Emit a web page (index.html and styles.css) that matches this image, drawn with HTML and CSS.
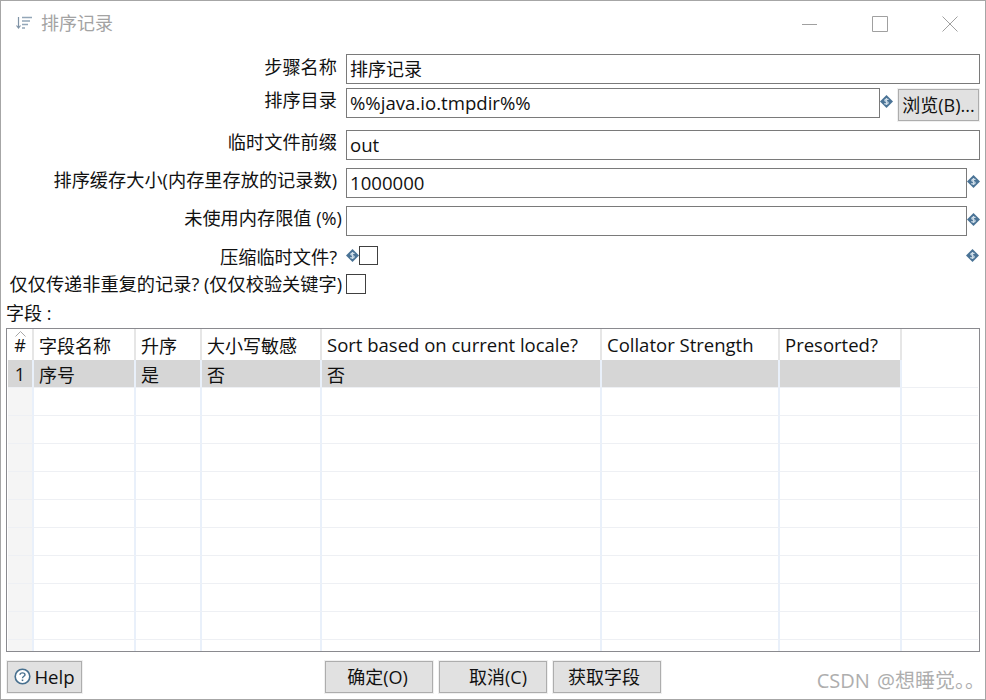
FILE: index.html
```html
<!DOCTYPE html>
<html>
<head>
  <meta charset="UTF-8">
  <title>排序记录</title>
  <link rel="stylesheet" href="styles.css">
</head>
<body>
  <svg class="defs" width="0" height="0">
    <symbol id="var" viewBox="0 0 13 13">
      <path d="M6.5 0L13 6.5 6.5 13 0 6.5z" fill="#4a7396"/>
      <path d="M8.5 4.6C8 3.9 5 3.6 4.8 5.2 4.6 7 8.4 6 8.2 7.900 8 9.400 5 9.100 4.400 8.300M6.500 2.900v7.200" fill="none" stroke="#cfdde8" stroke-width="1.200"/>
    </symbol>
  </svg>

  <div class="window">
    <div class="titlebar">
      <svg class="title-icon" width="17" height="14" viewBox="0 0 17 14">
        <path d="M2.500 1v10.500M.5 9.500l2 2.500 2-2.500" fill="none" stroke="#7f93a6" stroke-width="1.200"/>
        <path d="M6 1.500h10M6 5h8M6 8.500h6M6 12h3" fill="none" stroke="#93a6b8" stroke-width="1.300"/>
      </svg>
      <span class="title-text">排序记录</span>
      <div class="win-buttons">
        <svg width="16" height="16" viewBox="0 0 16 16"><path d="M0 8.500h15" stroke="#a0a0a0" fill="none"/></svg>
        <svg width="16" height="16" viewBox="0 0 16 16"><path d="M.5 .5h15v15H.5z" stroke="#a0a0a0" fill="none"/></svg>
        <svg width="16" height="16" viewBox="0 0 16 16"><path d="M.5 .5l15 15M15.500 .5l-15 15" stroke="#a0a0a0" fill="none"/></svg>
      </div>
    </div>

    <div class="form">
      <div class="row row-name">
        <label class="lbl">步骤名称</label>
        <input class="field field-cn" value="排序记录">
      </div>
      <div class="row row-dir">
        <label class="lbl">排序目录</label>
        <input class="field" value="%%java.io.tmpdir%%">
        <svg class="var"><use href="#var"/></svg>
        <button class="btn btn-browse">浏览(B)...</button>
      </div>
      <div class="row row-prefix">
        <label class="lbl">临时文件前缀</label>
        <input class="field" value="out">
      </div>
      <div class="row row-cache">
        <label class="lbl">排序缓存大小(内存里存放的记录数)</label>
        <input class="field" value="1000000">
        <svg class="var"><use href="#var"/></svg>
      </div>
      <div class="row row-free">
        <label class="lbl lbl-wide">未使用内存限值 (%)</label>
        <input class="field">
        <svg class="var"><use href="#var"/></svg>
      </div>
      <div class="row row-compress">
        <label class="lbl">压缩临时文件?</label>
        <svg class="var var-left"><use href="#var"/></svg>
        <span class="check"></span>
        <svg class="var var-end"><use href="#var"/></svg>
      </div>
      <div class="row row-unique">
        <label class="lbl lbl-wide">仅仅传递非重复的记录? (仅仅校验关键字)</label>
        <span class="check"></span>
      </div>
    </div>

    <div class="fields-title">字段 :</div>

    <div class="table-box">
      <table class="grid">
        <colgroup>
          <col class="c-num"><col class="c-name"><col class="c-asc"><col class="c-case">
          <col class="c-locale"><col class="c-coll"><col class="c-pre"><col>
        </colgroup>
        <thead>
          <tr>
            <th class="num"><svg class="sort-mark" width="11" height="6" viewBox="0 0 11 6"><path d="M.5 5.500L5.500 .5l5 5" fill="none" stroke="#a8a8a8"/></svg>#</th>
            <th>字段名称</th><th>升序</th><th>大小写敏感</th>
            <th class="en">Sort based on current locale?</th><th class="en">Collator Strength</th><th class="en">Presorted?</th><th class="blank"></th>
          </tr>
        </thead>
        <tbody>
          <tr class="selected">
            <td class="num">1</td><td>序号</td><td>是</td><td>否</td><td>否</td><td></td><td></td><td class="blank"></td>
          </tr>
          <tr><td class="num"></td><td></td><td></td><td></td><td></td><td></td><td></td><td class="blank"></td></tr>
          <tr><td class="num"></td><td></td><td></td><td></td><td></td><td></td><td></td><td class="blank"></td></tr>
          <tr><td class="num"></td><td></td><td></td><td></td><td></td><td></td><td></td><td class="blank"></td></tr>
          <tr><td class="num"></td><td></td><td></td><td></td><td></td><td></td><td></td><td class="blank"></td></tr>
          <tr><td class="num"></td><td></td><td></td><td></td><td></td><td></td><td></td><td class="blank"></td></tr>
          <tr><td class="num"></td><td></td><td></td><td></td><td></td><td></td><td></td><td class="blank"></td></tr>
          <tr><td class="num"></td><td></td><td></td><td></td><td></td><td></td><td></td><td class="blank"></td></tr>
          <tr><td class="num"></td><td></td><td></td><td></td><td></td><td></td><td></td><td class="blank"></td></tr>
          <tr><td class="num"></td><td></td><td></td><td></td><td></td><td></td><td></td><td class="blank"></td></tr>
          <tr class="last"><td class="num"></td><td></td><td></td><td></td><td></td><td></td><td></td><td class="blank"></td></tr>
        </tbody>
      </table>
    </div>

    <div class="footer">
      <button class="btn btn-help">
        <svg width="17" height="17" viewBox="0 0 17 17">
          <circle cx="8.500" cy="8.500" r="7.300" fill="#fff" stroke="#47708f" stroke-width="1.600"/>
          <path d="M6 6.700C6 4.300 11 4.300 11 6.700 11 8.400 8.500 8.200 8.500 10.200" fill="none" stroke="#47708f" stroke-width="1.400"/>
          <path d="M7.700 11.500h1.600v1.600H7.700z" fill="#47708f"/>
        </svg>
        Help
      </button>
      <div class="footer-center">
        <button class="btn btn-main btn-ok">确定(O)</button>
        <button class="btn btn-main btn-cancel">取消(C)</button>
        <button class="btn btn-main btn-get">获取字段</button>
      </div>
      <div class="watermark">CSDN @想睡觉。。</div>
    </div>
  </div>
</body>
</html>
```

FILE: styles.css
```css
* {
  box-sizing: border-box;
}

html, body {
  margin: 0;
  padding: 0;
}

body {
  width: 986px;
  height: 700px;
  background: #fff;
  color: #111;
  font-family: "Open Sans", "Noto Sans CJK SC", sans-serif;
  font-size: 18px;
  overflow: hidden;
}

.defs {
  display: block;
  height: 0;
}

.window {
  position: relative;
  width: 986px;
  height: 700px;
  border: 1px solid #a6a6a6;
  display: flex;
  flex-direction: column;
}

.titlebar {
  height: 53px;
  flex: none;
  display: flex;
  align-items: flex-start;
  padding: 14px 27px 0 15px;
}

.title-icon {
  margin-top: 1px;
}

.title-text {
  margin-left: 8px;
  color: #a3a3a3;
  font-size: 18px;
  line-height: 16px;
}

.win-buttons {
  margin-left: auto;
  display: flex;
  gap: 54px;
  margin-top: 1px;
}

.form {
  display: flex;
  flex-direction: column;
}

.row {
  display: flex;
  align-items: flex-start;
  padding-right: 5px;
}

.lbl {
  width: 336px;
  flex: none;
  text-align: right;
  white-space: nowrap;
  font-size: 18.200px;
  line-height: 24px;
}

.lbl-wide {
  width: 341px;
}

.field {
  flex: 1;
  min-width: 0;
  height: 30px;
  margin-left: 9px;
  padding: 0 3px 2px;
  border: 1px solid #7a7a7a;
  border-radius: 0;
  outline: none;
  background: #fff;
  color: #111;
  font: inherit;
  font-size: 18.600px;
}

.field-cn {
  font-size: 18px;
}

.lbl-wide + .field {
  margin-left: 4px;
}

.var {
  width: 13px;
  height: 13px;
  flex: none;
}

.row-name { height: 34px; }
.row-dir { height: 42px; padding-right: 6px; }
.row-prefix { height: 38px; }
.row-cache { height: 38px; padding-right: 12px; }
.row-free { height: 40px; padding-right: 12px; }
.row-compress { height: 28px; padding-right: 6px; }
.row-unique { height: 26px; }

.row-cache .var,
.row-free .var {
  margin: 7px -7px 0 0;
}

.row-name .lbl { padding-top: 1px; }

.row-dir .var {
  margin: 7px 0 0 0;
}

.btn {
  height: 32px;
  padding: 0 0 2px;
  border: 1px solid #adadad;
  outline: 1px solid #f0f0f0;
  background: #e1e1e1;
  color: #111;
  font: inherit;
  font-size: 18px;
  white-space: nowrap;
}

.btn-browse {
  width: 81px;
  flex: none;
  margin: 1px 0 0 5px;
}

.row-compress .var-left {
  margin: 3px 0 0 9px;
}

.check {
  width: 20px;
  height: 20px;
  flex: none;
  border: 1px solid #404040;
  background: #fff;
  display: block;
}

.row-compress .check {
  width: 19px;
  height: 19px;
}

.row-compress .lbl {
  margin-top: -1px;
}

.row-compress .var-end {
  margin: 3px 0 0 auto;
}

.row-unique .check {
  margin-left: 4px;
}

.row-unique .lbl {
  margin-top: -2px;
}

.fields-title {
  height: 24px;
  padding-left: 5px;
  margin-top: 1px;
  line-height: 24px;
  flex: none;
}

.table-box {
  margin: 3px 5px 0 5px;
  height: 324px;
  flex: none;
  border: 1px solid #8a8a8f;
  padding: 0 1px;
  overflow: hidden;
}

.grid {
  width: 100%;
  table-layout: fixed;
  border-collapse: separate;
  border-spacing: 0;
}

.c-num { width: 26px; }
.c-name { width: 102px; }
.c-asc { width: 66px; }
.c-case { width: 120px; }
.c-locale { width: 280px; }
.c-coll { width: 178px; }
.c-pre { width: 122px; }

.grid th,
.grid td {
  height: 28px;
  padding: 0 0 0 5px;
  border-right: 2px solid #e9f0fa;
  border-bottom: 1px solid #eef0f4;
  font-weight: normal;
  text-align: left;
  white-space: nowrap;
  font-size: 18px;
}

.grid th {
  height: 31px;
  border-bottom: 0;
  border-right-color: #e6e6e6;
}

.grid .en {
  font-size: 18.500px;
}

.grid .blank {
  border-right: 0;
}

.grid .num {
  position: relative;
  padding: 0;
  text-align: center;
  background: #f5f5f5;
}

.grid th.num {
  background: #fff;
}

.sort-mark {
  position: absolute;
  left: 7px;
  top: 2px;
}

.selected td {
  background: #d6d6d6;
}

.selected .num {
  background: #d6d6d6;
}

.selected .blank {
  background: #fff;
}

.footer {
  flex: none;
  height: 32px;
  margin-top: 9px;
  padding: 0 6px;
  display: flex;
  position: relative;
}

.btn-help {
  width: 75px;
  display: flex;
  align-items: center;
  justify-content: center;
  gap: 3px;
  font-size: 18.600px;
}

.footer-center {
  display: flex;
  gap: 6px;
  margin-left: 243px;
}

.btn-main {
  width: 108px;
}

.btn-ok {
  padding-right: 3px;
}

.btn-cancel {
  padding-left: 10px;
}

.btn-get {
  padding-right: 6px;
}

.watermark {
  position: absolute;
  right: 0;
  bottom: 0;
  color: #aeaeae;
  font-size: 20px;
  line-height: 24px;
  word-spacing: 2px;
}
```
